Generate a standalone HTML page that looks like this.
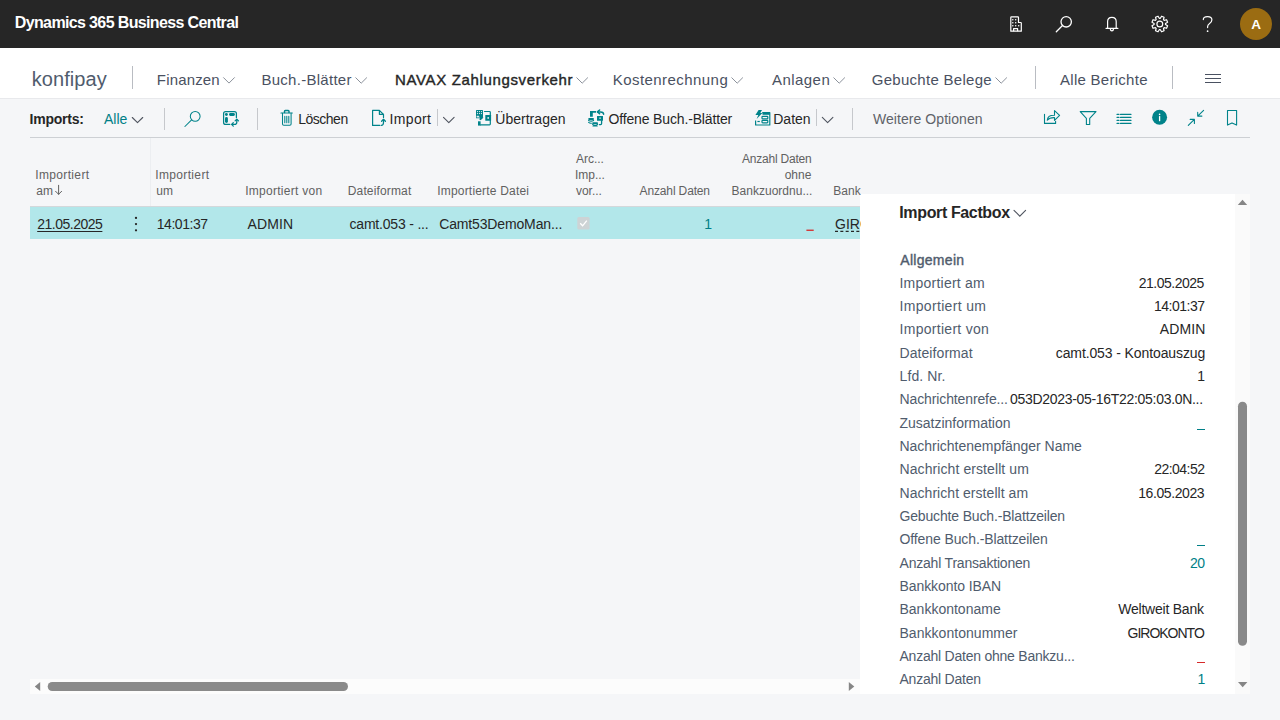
<!DOCTYPE html>
<html><head><meta charset="utf-8">
<style>
*{box-sizing:border-box;margin:0;padding:0}
html,body{width:1280px;height:720px;overflow:hidden;background:#f5f6f8;font-family:"Liberation Sans",sans-serif;position:relative}
.t{position:absolute;white-space:pre;line-height:normal}
.a{position:absolute;white-space:pre;line-height:normal}
#top{position:absolute;left:0;top:0;width:1280px;height:48px;background:#262626}
#nav{position:absolute;left:0;top:48px;width:1280px;height:51px;background:#fff;border-bottom:1px solid #e8e9ec}
.nv{position:absolute;top:70.9px;font-size:16px;color:#4a5161;white-space:pre}
.sep{position:absolute;width:1px;background:#b9bcc2}
.tb{position:absolute;top:111.6px;font-size:14px;color:#262626;white-space:pre}
.hd{position:absolute;font-size:12px;color:#616161;white-space:pre;line-height:16px}
.rw{position:absolute;top:215.7px;font-size:14px;color:#262626;white-space:pre}
.fl{position:absolute;left:900px;font-size:14px;color:#5b6373;white-space:pre;letter-spacing:0.2px}
.fv{position:absolute;right:74px;font-size:14px;color:#262626;white-space:pre}
.dash{position:absolute;left:1197px;width:8px;height:1.3px}
svg{position:absolute;overflow:visible}
</style></head><body>
<!-- TOP BAR -->
<div id="top"></div>
<!-- building -->
<svg style="left:0;top:0" width="1280" height="48" viewBox="0 0 1280 48">
 <g fill="none" stroke="#fff" stroke-width="1.2" stroke-linejoin="round">
  <path d="M1010.8 31.2 V17.4 Q1010.8 16.8 1011.4 16.8 H1017.9 Q1018.5 16.8 1018.5 17.4 V22.5 H1020.7 Q1021.3 22.5 1021.3 23.1 V31.2 Z"/>
  <path d="M1013.6 31.2 V28.6 H1017.6 V31.2"/>
 </g>
 <g fill="#fff">
  <circle cx="1012.8" cy="19.8" r="0.75"/><circle cx="1015.7" cy="19.8" r="0.75"/>
  <circle cx="1012.8" cy="22.8" r="0.75"/><circle cx="1015.7" cy="22.8" r="0.75"/>
  <circle cx="1012.8" cy="25.8" r="0.75"/><circle cx="1015.7" cy="25.8" r="0.75"/><circle cx="1018.7" cy="25.8" r="0.75"/>
 </g>
 <!-- search -->
 <g fill="none" stroke="#fff" stroke-width="1.3">
  <circle cx="1066.2" cy="21.8" r="5.2"/>
  <path d="M1062.5 25.5 L1056.3 31.7" stroke-linecap="round"/>
 </g>
 <!-- bell -->
 <g fill="none" stroke="#fff" stroke-width="1.2" stroke-linejoin="round">
  <path d="M1107.6 28.2 V21.6 Q1107.6 17.4 1111.9 17.4 Q1116.2 17.4 1116.2 21.6 V28.2"/>
  <path d="M1106 28.3 H1117.9" stroke-linecap="round"/>
  <path d="M1110.2 28.6 Q1110.4 30.8 1111.9 30.8 Q1113.4 30.8 1113.6 28.6"/>
 </g>
 <!-- gear -->
 <g fill="none" stroke="#fff" stroke-width="1.2" stroke-linejoin="round">
  <path d="M1165.48 24.53 L1167.60 25.77 L1166.57 28.27 L1164.19 27.64 L1163.44 28.39 L1164.07 30.77 L1161.57 31.80 L1160.33 29.68 L1159.27 29.68 L1158.03 31.80 L1155.53 30.77 L1156.16 28.39 L1155.41 27.64 L1153.03 28.27 L1152.00 25.77 L1154.12 24.53 L1154.12 23.47 L1152.00 22.23 L1153.03 19.73 L1155.41 20.36 L1156.16 19.61 L1155.53 17.23 L1158.03 16.20 L1159.27 18.32 L1160.33 18.32 L1161.57 16.20 L1164.07 17.23 L1163.44 19.61 L1164.19 20.36 L1166.57 19.73 L1167.60 22.23 L1165.48 23.47 Z"/>
  <circle cx="1159.8" cy="24" r="2.9"/>
 </g>
 <!-- help -->
 <g fill="none" stroke="#fff" stroke-width="1.2" stroke-linecap="round">
  <path d="M1203.3 19.6 Q1203.3 16.6 1207.6 16.6 Q1211.9 16.6 1211.9 19.8 Q1211.9 22 1209.6 23.4 Q1207.6 24.6 1207.6 26.8 V27.6"/>
 </g>
 <circle cx="1207.6" cy="31.2" r="0.85" fill="#fff"/>
 <!-- avatar -->
 <circle cx="1256" cy="24" r="16" fill="#9b6c12"/>
</svg>
<div class="av" style="position:absolute;left:1251.2px;top:16.9px;font-size:13.5px;font-weight:700;color:#fff;line-height:normal">A</div>

<!-- NAV -->
<div id="nav"></div>
<div class="sep" style="left:132px;top:66px;height:23px"></div>
<div class="sep" style="left:1035px;top:66px;height:23px"></div>
<div class="sep" style="left:1172px;top:66px;height:23px"></div>
<svg style="left:0;top:48px" width="1280" height="50" viewBox="0 48 1280 50">
 <g fill="none" stroke="#8b919b" stroke-width="1">
  <path d="M223.3 77.4 L229 83.1 L234.7 77.4"/>
  <path d="M355.5 77.5 L361.2 83.2 L366.9 77.5"/>
  <path d="M576.5 77.5 L582.2 83.2 L587.9 77.5"/>
  <path d="M731.5 77.5 L737.2 83.2 L742.9 77.5"/>
  <path d="M833.5 77.5 L839.2 83.2 L844.9 77.5"/>
  <path d="M995.5 77.5 L1001.2 83.2 L1006.9 77.5"/>
 </g>
 <g stroke="#4a5161" stroke-width="1.1">
  <path d="M1205 74.5 H1221 M1205 78.5 H1221 M1205 82.5 H1221"/>
 </g>
</svg>
<!-- TOOLBAR -->
<div class="sep" style="left:164px;top:107.5px;height:22px;background:#c6c8cc"></div>
<div class="sep" style="left:257px;top:107.5px;height:22px;background:#c6c8cc"></div>
<div class="sep" style="left:852px;top:107.5px;height:22px;background:#c6c8cc"></div>
<div class="sep" style="left:437px;top:109px;height:17px;background:#c6c8cc"></div>
<div class="sep" style="left:816px;top:109px;height:17px;background:#c6c8cc"></div>
<div style="position:absolute;left:30px;top:137px;width:1220px;height:1px;background:#cdd0d4"></div>
<svg style="left:0;top:98px" width="1280" height="42" viewBox="0 98 1280 42">
 <g fill="none" stroke="#00838a" stroke-width="1.1" stroke-linejoin="round" stroke-linecap="round">
  <!-- alle chevron -->
  <path d="M132.3 117.5 L137.5 122.7 L142.7 117.5" stroke="#505560"/>
  <!-- import chevron -->
  <path d="M443.5 117.3 L448.8 122.6 L454.1 117.3" stroke="#505560"/>
  <path d="M822.3 117.3 L827.6 122.6 L832.9 117.3" stroke="#505560"/>
  <!-- search -->
  <circle cx="195.2" cy="116.3" r="4.9" stroke-width="1.05"/>
  <path d="M191.6 119.9 L184.9 126.5" stroke-width="1.05"/>
  <!-- layout -->
  <path d="M229.8 124.4 H225.6 Q223.6 124.4 223.6 122.4 V113.6 Q223.6 111.6 225.6 111.6 H234.4 Q236.4 111.6 236.4 113.6 V117.6" stroke-width="1.25"/>
  <path d="M236.8 119.6 V122.2 Q236.8 124.4 234.6 124.4 H232.2" stroke-width="1.25"/>
  <path d="M235.1 120.9 L236.8 119.2 L238.5 120.9" stroke-width="1.25"/>
  <path d="M233.3 122.7 L231.6 124.4 L233.3 126.1" stroke-width="1.25"/>
 </g>
 <g fill="#00838a">
  <circle cx="226.4" cy="114.5" r="1.45"/>
  <rect x="229" y="113.1" width="5.9" height="2.8" rx="1.4"/>
  <rect x="225" y="117.1" width="2.9" height="5.8" rx="1.45"/>
 </g>
 <g fill="none" stroke="#00838a" stroke-width="1.1" stroke-linejoin="round" stroke-linecap="round">
  <!-- trash -->
  <path d="M284.5 112.6 V111.4 Q284.5 110.6 285.3 110.6 H288.2 Q289 110.6 289 111.4 V112.6" stroke-width="1.5"/>
  <path d="M281 113 H292.3" stroke-width="1.2"/>
  <path d="M282.5 113.2 V124 Q282.5 125.3 283.8 125.3 H289.8 Q291.1 125.3 291.1 124 V113.2" stroke-width="1.05"/>
  <path d="M284.8 116.3 V122.8 M286.8 116.3 V122.8 M288.8 116.3 V122.8" stroke-width="1.05"/>
  <!-- doc -->
  <path d="M379.8 125.4 H372.6 V110.4 H379.4 L383.5 114.5 V117.4" stroke-width="1.2"/>
  <path d="M379.4 110.6 V114.3 H383.3" stroke-width="1.2"/>
  <path d="M381.3 125.4 Q383.5 125.4 383.5 122.6 V119.5" stroke-width="1.2"/>
  <path d="M381.6 121.2 L383.5 119.3 L385.4 121.2" stroke-width="1.3"/>
  <!-- ubertragen -->
  <path d="M484.5 111.5 H489.5 Q490.3 111.5 490.3 112.3 V124.1 Q490.3 124.9 489.5 124.9 H480.6" stroke-width="1.2"/>
 </g>
 <g fill="#00838a">
  <rect x="476" y="110" width="7" height="7.2" rx="0.6"/>
  <path d="M476 116.6 H479.2 L481.4 115.8 L483.4 117.7 L480.6 120.2 L479.2 119.2 L480 118.3 H476 Z"/>
  <rect x="485.3" y="115.1" width="5.8" height="5.6" rx="0.5"/>
  <rect x="478" y="121.3" width="2.6" height="4.3"/>
 </g>
 <g fill="#f5f6f8">
  <circle cx="477.5" cy="111.6" r="0.6"/><circle cx="479.5" cy="111.6" r="0.6"/><circle cx="481.5" cy="111.6" r="0.6"/>
  <circle cx="477.5" cy="113.6" r="0.6"/><circle cx="479.5" cy="113.6" r="0.6"/><circle cx="481.5" cy="113.6" r="0.6"/>
  <path d="M476.6 115.8 H478.8 L479.8 117.5 L476.6 117.5 Z" opacity="0.9"/>
  <rect x="487.4" y="117.2" width="1.6" height="1.5"/>
 </g>
 <!-- offene -->
 <g fill="#00838a">
  <path d="M590 111 H596 V112.7 H592.8 V116.8 H590 Z"/>
  <rect x="597" y="116" width="6" height="4.7" rx="0.3"/>
  <rect x="588.2" y="118" width="5.8" height="1.9" rx="0.9"/>
  <rect x="592.2" y="122.2" width="5.8" height="1.9" rx="0.9"/>
 </g>
 <g fill="#f5f6f8"><rect x="599.4" y="117.5" width="1.3" height="1.3"/></g>
 <g fill="none" stroke="#00838a" stroke-linecap="round" stroke-linejoin="round">
  <path d="M603.6 114.3 Q603.6 111.9 600.6 111.9 H597.6" stroke-width="1.5"/>
  <path d="M599.6 110 L597.4 111.9 L599.6 113.8" stroke-width="1.5"/>
  <path d="M601.6 120.7 V123.6 Q601.6 124.6 600.6 124.6 H599.4" stroke-width="1.3"/>
  <path d="M588.6 120.4 Q591.1 121.8 593.6 120.4 M588.6 122.3 Q590 123.5 591.4 123.2" stroke-width="1.1"/>
  <path d="M592.6 124.5 Q595.1 125.9 597.6 124.5 M593 126 H597.2" stroke-width="1.1"/>
 </g>
 <!-- daten -->
 <g fill="#00838a">
  <path d="M758.6 110 H762 L760.3 113 H762.4 L756.6 118.9 L758.3 114.9 H755.4 Z"/>
 </g>
 <g fill="none" stroke="#00838a" stroke-width="1.2" stroke-linejoin="round">
  <path d="M762.2 112.6 H769.8 V125 H755.6 V120.5"/>
  <path d="M762.5 113.9 H769.8" stroke-width="1.8"/>
  <rect x="762" y="116.4" width="5.8" height="2.5" rx="0.7"/>
  <rect x="762" y="120.3" width="5.8" height="2.5" rx="0.7"/>
  <path d="M757.4 121.5 H759.8"/>
 </g>
 <!-- right icons -->
 <g fill="none" stroke="#00838a" stroke-width="1.1" stroke-linejoin="round" stroke-linecap="round">
  <path d="M1044.5 114.3 V123.4 H1055.6 V121.3"/>
  <path d="M1047.3 120.2 Q1047.6 115.1 1054.5 115.3 V110.6 L1059.6 115.4 L1054.5 120.4 V117.6 Q1049.6 117.4 1047.3 120.2 Z"/>
  <path d="M1080.2 111.6 H1096 L1089.7 118.3 V124.5 H1086.4 V118.3 Z"/>
  <path d="M1117 114.4 H1119 M1117 117.4 H1119 M1117 120.4 H1119 M1117 123.4 H1119"/>
  <path d="M1120.5 114.4 H1131 M1120.5 117.4 H1131 M1120.5 120.4 H1131 M1120.5 123.4 H1131"/>
  <path d="M1203.6 110.3 L1197.7 116.1 M1197.7 112.4 V116.1 H1201.9"/>
  <path d="M1188.3 125.4 L1194.4 119.4 M1190.2 119.4 H1194.4 V123.5"/>
  <path d="M1227.5 110.5 H1236.6 V125.1 L1232 122.9 L1227.5 125.1 Z"/>
 </g>
 <circle cx="1159.6" cy="117.25" r="7.5" fill="#00838a"/>
 <rect x="1158.95" y="116.1" width="1.3" height="5.1" fill="#fff"/>
 <circle cx="1159.6" cy="114.4" r="0.8" fill="#fff"/>
</svg>
<!-- TABLE -->
<div style="position:absolute;left:150px;top:138px;width:1px;height:68px;background:#eceef1"></div>
<svg style="left:0;top:138px" width="860" height="68" viewBox="0 138 860 68">
 <g fill="none" stroke="#616161" stroke-width="1" stroke-linecap="round" stroke-linejoin="round">
  <path d="M58.6 185.3 V194.3 M55.6 191.3 L58.6 194.3 L61.6 191.3"/>
 </g>
</svg>
<div style="position:absolute;left:30px;top:206px;width:830px;height:33px;background:#b2e7ea;border-top:1px solid #d4d8db"></div>
<svg style="left:0;top:206px" width="860" height="33" viewBox="0 206 860 33">
 <g fill="#262626">
  <circle cx="136" cy="217.9" r="1.15"/><circle cx="136" cy="224.1" r="1.15"/><circle cx="136" cy="230.3" r="1.15"/>
 </g>
 <rect x="577.3" y="217.1" width="12.3" height="12.3" rx="1.5" fill="#cdd3d5"/>
 <path d="M580.2 223.3 L582.6 225.8 L586.8 220.6" fill="none" stroke="#fff" stroke-width="1.3"/>
 <rect x="806.4" y="229.6" width="7.3" height="1.3" fill="#d62a2a"/>
</svg>

<!-- FACTBOX -->
<div style="position:absolute;left:860px;top:194px;width:375px;height:500px;background:#fff"></div>
<div style="position:absolute;left:1235px;top:194px;width:15px;height:500px;background:#fafafa"></div>
<svg style="left:860px;top:194px" width="390" height="500" viewBox="860 194 390 500">
 <path d="M1014 210.3 L1019.8 216.1 L1025.6 210.3" fill="none" stroke="#505560" stroke-width="1.1" stroke-linecap="round"/>
 <path d="M1237.8 205 L1242.5 199.7 L1247.2 205 Z" fill="#868686"/>
 <path d="M1238 682 L1247.4 682 L1242.7 687.2 Z" fill="#868686"/>
 <rect x="1238" y="401.7" width="9" height="244" rx="4.5" fill="#8a8a8a"/>
</svg>
<!-- HSCROLL -->
<div style="position:absolute;left:30px;top:679px;width:830px;height:15px;background:#fcfcfc"></div>
<svg style="left:0;top:679px" width="860" height="15" viewBox="0 679 860 15">
 <path d="M40.2 681.9 L40.2 691.1 L34.8 686.5 Z" fill="#868686"/>
 <path d="M848.8 681.9 L848.8 691.1 L854.3 686.5 Z" fill="#868686"/>
 <rect x="47.7" y="682" width="300.3" height="9" rx="4.5" fill="#8a8a8a"/>
</svg>

<div class="t" style="left:14.8px;top:14px;font-size:16px;font-weight:700;color:#fff;letter-spacing:-0.636px;">Dynamics 365 Business Central</div>
<div class="t" style="left:31.7px;top:68px;font-size:20px;font-weight:400;color:#505c6d;letter-spacing:0.071px;">konfipay</div>
<div class="t" style="left:156.8px;top:71px;font-size:15px;font-weight:400;color:#4a5161;letter-spacing:0.171px;">Finanzen</div>
<div class="t" style="left:261.4px;top:71px;font-size:15px;font-weight:400;color:#4a5161;letter-spacing:0.283px;">Buch.-Blätter</div>
<div class="t" style="left:395.0px;top:71px;font-size:15px;font-weight:400;-webkit-text-stroke:0.4px currentColor;color:#262626;letter-spacing:0.65px;">NAVAX Zahlungsverkehr</div>
<div class="t" style="left:612.75px;top:71px;font-size:15px;font-weight:400;color:#4a5161;letter-spacing:0.442px;">Kostenrechnung</div>
<div class="t" style="left:772.0px;top:71px;font-size:15px;font-weight:400;color:#4a5161;letter-spacing:0.45px;">Anlagen</div>
<div class="t" style="left:871.7px;top:71px;font-size:15px;font-weight:400;color:#4a5161;letter-spacing:0.286px;">Gebuchte Belege</div>
<div class="t" style="left:1060.0px;top:71px;font-size:15px;font-weight:400;color:#4a5161;letter-spacing:0.275px;">Alle Berichte</div>
<div class="t" style="left:29.5px;top:111px;font-size:14px;font-weight:700;color:#262626;letter-spacing:-0.214px;">Imports:</div>
<div class="t" style="left:104.0px;top:111px;font-size:14px;font-weight:400;color:#007f87;letter-spacing:0.0px;">Alle</div>
<div class="t" style="left:298.25px;top:111px;font-size:14px;font-weight:400;color:#262626;letter-spacing:-0.5px;">Löschen</div>
<div class="t" style="left:389.5px;top:111px;font-size:14px;font-weight:400;color:#262626;letter-spacing:0.35px;">Import</div>
<div class="t" style="left:495.25px;top:111px;font-size:14px;font-weight:400;color:#262626;letter-spacing:0.028px;">Übertragen</div>
<div class="t" style="left:608.5px;top:111px;font-size:14px;font-weight:400;color:#262626;letter-spacing:-0.153px;">Offene Buch.-Blätter</div>
<div class="t" style="left:773.2px;top:111px;font-size:14px;font-weight:400;color:#262626;letter-spacing:0.025px;">Daten</div>
<div class="t" style="left:873.0px;top:111px;font-size:14px;font-weight:400;color:#5f6369;letter-spacing:0.06px;">Weitere Optionen</div>
<div class="t" style="left:35.25px;top:168px;font-size:12px;font-weight:400;color:#616161;letter-spacing:0.35px;">Importiert</div>
<div class="t" style="left:36.25px;top:184px;font-size:12px;font-weight:400;color:#616161;letter-spacing:0.0px;">am</div>
<div class="t" style="left:155.25px;top:168px;font-size:12px;font-weight:400;color:#616161;letter-spacing:0.35px;">Importiert</div>
<div class="t" style="left:156.25px;top:184px;font-size:12px;font-weight:400;color:#616161;letter-spacing:0.0px;">um</div>
<div class="t" style="left:245.25px;top:184px;font-size:12px;font-weight:400;color:#616161;letter-spacing:0.269px;">Importiert von</div>
<div class="t" style="left:347.75px;top:184px;font-size:12px;font-weight:400;color:#616161;letter-spacing:0.15px;">Dateiformat</div>
<div class="t" style="left:437.25px;top:184px;font-size:12px;font-weight:400;color:#616161;letter-spacing:0.188px;">Importierte Datei</div>
<div class="t" style="left:575.9px;top:152px;font-size:12px;font-weight:400;color:#616161;letter-spacing:0.0px;">Arc...</div>
<div class="t" style="left:574.9px;top:168px;font-size:12px;font-weight:400;color:#616161;letter-spacing:0.0px;">Imp...</div>
<div class="t" style="left:575.9px;top:184px;font-size:12px;font-weight:400;color:#616161;letter-spacing:0.0px;">vor...</div>
<div class="t" style="left:639.6px;top:184px;font-size:12px;font-weight:400;color:#616161;letter-spacing:-0.145px;">Anzahl Daten</div>
<div class="t" style="left:741.9px;top:152px;font-size:12px;font-weight:400;color:#616161;letter-spacing:-0.2px;">Anzahl Daten</div>
<div class="t" style="left:784.7px;top:168px;font-size:12px;font-weight:400;color:#616161;letter-spacing:0.0px;">ohne</div>
<div class="t" style="left:731.6px;top:184px;font-size:12px;font-weight:400;color:#616161;letter-spacing:0.008px;">Bankzuordnu...</div>
<div class="t" style="left:833.3px;top:184px;font-size:12px;font-weight:400;color:#616161;letter-spacing:0.0px;">Bank</div>
<div class="t" style="left:37.2px;top:216px;font-size:14px;font-weight:400;color:#262626;letter-spacing:-0.489px;text-decoration:underline;text-underline-offset:2px;">21.05.2025</div>
<div class="t" style="left:156.8px;top:216px;font-size:14px;font-weight:400;color:#262626;letter-spacing:-0.471px;">14:01:37</div>
<div class="t" style="left:247.5px;top:216px;font-size:14px;font-weight:400;color:#262626;letter-spacing:0.125px;">ADMIN</div>
<div class="t" style="left:349.5px;top:216px;font-size:14px;font-weight:400;color:#262626;letter-spacing:-0.192px;">camt.053 - ...</div>
<div class="t" style="left:439.25px;top:216px;font-size:14px;font-weight:400;color:#262626;letter-spacing:-0.15px;">Camt53DemoMan...</div>
<div class="t" style="left:704.2px;top:216px;font-size:14px;font-weight:400;color:#007f87;letter-spacing:0.0px;">1</div>
<div class="t" style="left:835.0px;top:216px;font-size:14px;font-weight:400;color:#262626;letter-spacing:0.0px;text-decoration:underline dashed;text-underline-offset:2px;width:25.5px;overflow:hidden;">GIRO</div>
<div class="t" style="left:899.3px;top:204px;font-size:16px;font-weight:700;color:#262626;letter-spacing:-0.369px;">Import Factbox</div>
<div class="t" style="left:900.3px;top:252px;font-size:14px;font-weight:400;-webkit-text-stroke:0.4px currentColor;color:#505c6d;letter-spacing:0.288px;">Allgemein</div>
<div class="t" style="left:899.5px;top:275px;font-size:14px;font-weight:400;color:#505c6d;letter-spacing:0.229px;">Importiert am</div>
<div class="t" style="left:1138.75px;top:275px;font-size:14px;font-weight:400;color:#262626;letter-spacing:-0.5px;">21.05.2025</div>
<div class="t" style="left:899.5px;top:298px;font-size:14px;font-weight:400;color:#505c6d;letter-spacing:0.333px;">Importiert um</div>
<div class="t" style="left:1154.0px;top:298px;font-size:14px;font-weight:400;color:#262626;letter-spacing:-0.486px;">14:01:37</div>
<div class="t" style="left:899.5px;top:321px;font-size:14px;font-weight:400;color:#505c6d;letter-spacing:0.288px;">Importiert von</div>
<div class="t" style="left:1159.75px;top:321px;font-size:14px;font-weight:400;color:#262626;letter-spacing:0.113px;">ADMIN</div>
<div class="t" style="left:899.5px;top:345px;font-size:14px;font-weight:400;color:#505c6d;letter-spacing:0.075px;">Dateiformat</div>
<div class="t" style="left:1055.75px;top:345px;font-size:14px;font-weight:400;color:#262626;letter-spacing:-0.107px;">camt.053 - Kontoauszug</div>
<div class="t" style="left:899.5px;top:368px;font-size:14px;font-weight:400;color:#505c6d;letter-spacing:0.107px;">Lfd. Nr.</div>
<div class="t" style="left:1197.25px;top:368px;font-size:14px;font-weight:400;color:#262626;letter-spacing:0.0px;">1</div>
<div class="t" style="left:899.5px;top:391px;font-size:14px;font-weight:400;color:#505c6d;letter-spacing:-0.118px;">Nachrichtenrefe...</div>
<div class="t" style="left:1010.0px;top:391px;font-size:14px;font-weight:400;color:#262626;letter-spacing:-0.304px;">053D2023-05-16T22:05:03.0N...</div>
<div class="t" style="left:899.5px;top:415px;font-size:14px;font-weight:400;color:#505c6d;letter-spacing:-0.016px;">Zusatzinformation</div>
<div class="t" style="left:899.5px;top:438px;font-size:14px;font-weight:400;color:#505c6d;letter-spacing:-0.021px;">Nachrichtenempfänger Name</div>
<div class="t" style="left:899.5px;top:461px;font-size:14px;font-weight:400;color:#505c6d;letter-spacing:0.088px;">Nachricht erstellt um</div>
<div class="t" style="left:1154.25px;top:461px;font-size:14px;font-weight:400;color:#262626;letter-spacing:-0.536px;">22:04:52</div>
<div class="t" style="left:899.5px;top:485px;font-size:14px;font-weight:400;color:#505c6d;letter-spacing:0.05px;">Nachricht erstellt am</div>
<div class="t" style="left:1138.25px;top:485px;font-size:14px;font-weight:400;color:#262626;letter-spacing:-0.417px;">16.05.2023</div>
<div class="t" style="left:899.5px;top:508px;font-size:14px;font-weight:400;color:#505c6d;letter-spacing:-0.16px;">Gebuchte Buch.-Blattzeilen</div>
<div class="t" style="left:899.5px;top:531px;font-size:14px;font-weight:400;color:#505c6d;letter-spacing:-0.109px;">Offene Buch.-Blattzeilen</div>
<div class="t" style="left:899.5px;top:555px;font-size:14px;font-weight:400;color:#505c6d;letter-spacing:-0.197px;">Anzahl Transaktionen</div>
<div class="t" style="left:1190.0px;top:555px;font-size:14px;font-weight:400;color:#007f87;letter-spacing:-0.5px;">20</div>
<div class="t" style="left:899.5px;top:578px;font-size:14px;font-weight:400;color:#505c6d;letter-spacing:-0.077px;">Bankkonto IBAN</div>
<div class="t" style="left:899.5px;top:601px;font-size:14px;font-weight:400;color:#505c6d;letter-spacing:0.0px;">Bankkontoname</div>
<div class="t" style="left:1118.25px;top:601px;font-size:14px;font-weight:400;color:#262626;letter-spacing:-0.229px;">Weltweit Bank</div>
<div class="t" style="left:899.5px;top:625px;font-size:14px;font-weight:400;color:#505c6d;letter-spacing:0.036px;">Bankkontonummer</div>
<div class="t" style="left:1127.5px;top:625px;font-size:14px;font-weight:400;color:#262626;letter-spacing:-1.0px;">GIROKONTO</div>
<div class="t" style="left:899.5px;top:648px;font-size:14px;font-weight:400;color:#505c6d;letter-spacing:-0.231px;">Anzahl Daten ohne Bankzu...</div>
<div class="t" style="left:899.5px;top:671px;font-size:14px;font-weight:400;color:#505c6d;letter-spacing:-0.227px;">Anzahl Daten</div>
<div class="t" style="left:1197.5px;top:671px;font-size:14px;font-weight:400;color:#007f87;letter-spacing:0.0px;">1</div>
<div class="dash" style="top:429px;background:#007f87"></div>
<div class="dash" style="top:545px;background:#007f87"></div>
<div class="dash" style="top:662px;background:#d62a2a"></div>
</body></html>
